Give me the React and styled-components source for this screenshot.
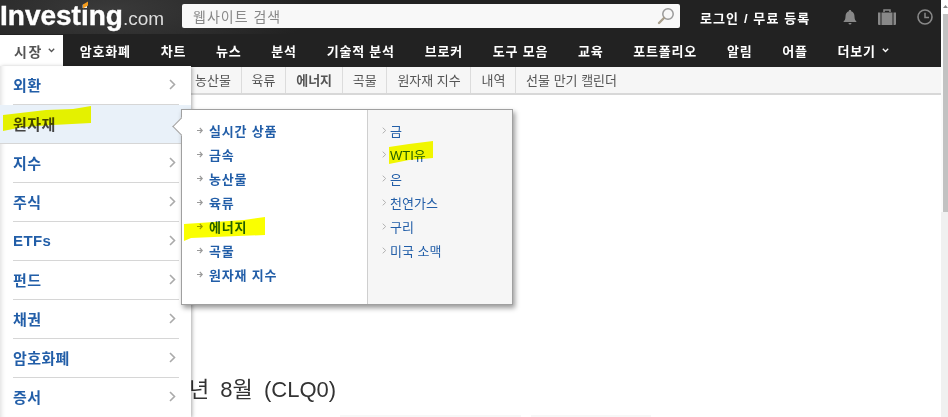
import React from "react";
import styled, { createGlobalStyle } from "styled-components";

const GlobalStyle = createGlobalStyle`
    html, body {
        margin: 0;
        padding: 0;
        height: 100%;
        overflow: hidden;
        background: #fff;
        font-family: "Liberation Sans", "Noto Sans CJK KR", sans-serif;
    }
`;

const Page = styled('div')`
    position: relative;
    display: flex;
    width: 948px;
    height: 417px;
    overflow: hidden;
    background: #fff;
`;

const Main = styled('div')`
    width: 941px;
    flex-shrink: 0;
`;

const TopBar = styled('header')`
    display: flex;
    align-items: center;
    height: 34px;
    background: radial-gradient(ellipse 200px 60px at 110px 10px, #3a3a3a, #222 100%);
    background-color: #222;
`;

const Logo = styled('div')`
    position: relative;
    width: 182px;
    display: flex;
    align-items: baseline;
    color: #fff;
    height: 34px;
    line-height: 32px;
    flex-shrink: 0;
`;

const LogoWord = styled('span')`
    font-size: 28px;
    font-weight: bold;
    -webkit-text-stroke: 0.4px #fff;
`;

const LogoCom = styled('span')`
    font-size: 19px;
    color: #ddd;
`;

const LogoDot = styled('span')`
    position: absolute;
    left: 83px;
    top: 3px;
    width: 5px;
    height: 4px;
    background: #f49c1c;
    transform: skewY(-30deg);
`;

const SearchBox = styled('div')`
    display: flex;
    align-items: center;
    justify-content: space-between;
    width: 498px;
    height: 24px;
    margin-top: -2px;
    box-sizing: border-box;
    padding: 0 5px 0 11px;
    background: #f8f8f8;
    border-radius: 2px;
    color: #888;
    font-size: 14px;
    letter-spacing: 1px;
`;

const UserLinks = styled('div')`
    margin-left: 20px;
    width: 143px;
    color: #fff;
    font-size: 13px;
    font-weight: bold;
    white-space: nowrap;
    letter-spacing: 1.1px;
`;

const IconRow = styled('div')`
    display: flex;
    align-items: center;
    gap: 21px;
    height: 32px;
`;

const NavBar = styled('nav')`
    display: flex;
    height: 33px;
    background: #222;
`;

const MarketTab = styled('div')`
    display: flex;
    align-items: center;
    gap: 5px;
    box-sizing: border-box;
    width: 63px;
    height: 31px;
    margin: 1px 2px 0 0;
    padding-left: 14px;
    background: #fff;
    color: #555;
    font-size: 14px;
    font-weight: bold;
    letter-spacing: 1.5px;
    white-space: nowrap;
`;

const NavItem = styled('div')`
    display: flex;
    align-items: center;
    gap: 6px;
    padding: 0 15px 0 14.8px;
    color: #fff;
    font-size: 13px;
    font-weight: bold;
    letter-spacing: 0.8px;
    white-space: nowrap;
`;

const SubNav = styled('div')`
    display: flex;
    height: 28px;
    box-sizing: border-box;
    padding-left: 185px;
    background: #f6f6f6;
    border-bottom: 2px solid #d8d8d8;
`;

const SubItem = styled('div')`
    display: flex;
    align-items: center;
    padding: 0 9.7px 1px 10px;
    border-right: 1px solid #dcdcdc;
    color: #555;
    font-size: 13px;
    font-weight: ${p => (p.$bold ? 'bold' : 'normal')};
    white-space: nowrap;
    &:last-child {
        border-right: 0;
    }
`;

const Content = styled('main')`
    padding: 283px 0 0 189px;
`;

const Title = styled('h1')`
    margin: 0;
    font-size: 22px;
    font-weight: normal;
    word-spacing: 5px;
    line-height: 24px;
    color: #333;
    white-space: nowrap;
`;

const FaintRow = styled('div')`
    display: flex;
    gap: 10px;
    margin: 13px 0 0 151px;
`;

const FaintBox = styled('div')`
    width: ${p => p.$w}px;
    height: 4px;
    background: #f7f7f7;
`;

const Scrollbar = styled('aside')`
    display: flex;
    flex-direction: column;
    width: 7px;
    background: #f0f0f0;
`;

const ScrollCap = styled('div')`
    display: flex;
    justify-content: flex-end;
    height: 14px;
    padding: 5px 0 0;
    box-sizing: border-box;
    background: #fff;
`;

const ScrollThumb = styled('div')`
    height: 198px;
    border-left: 2px solid #fbfbfb;
    background: #c2c2c2;
`;

const MarketMenu = styled('div')`
    position: absolute;
    left: 0;
    top: 66px;
    width: 191px;
    height: 351px;
    background: #fff;
    box-shadow: 1px 1px 4px rgba(0, 0, 0, 0.35), inset 5px 0 5px -4px rgba(0, 0, 0, 0.15);
`;

const MenuRow = styled('div')`
    display: flex;
    align-items: center;
    justify-content: space-between;
    box-sizing: border-box;
    height: 39px;
    margin: 0 12px 0 13px;
    padding: 0 3px 2px 0;
    border-bottom: 1px solid #d6d6d6;
    color: #225ea8;
    font-size: 15px;
    font-weight: bold;
    letter-spacing: 0.4px;
    &:last-child {
        border-bottom: 0;
    }
`;

const ActiveMenuRow = styled(MenuRow)`
    margin: 0;
    padding: 0 15px 2px 13px;
    background: #e9f1f9;
    color: #444;
`;

const SubMenu = styled('div')`
    position: absolute;
    left: 181px;
    top: 109px;
    width: 332px;
    height: 196px;
    display: flex;
    box-sizing: border-box;
    background: #fff;
    border: 1px solid #a0a0a0;
    box-shadow: 2px 3px 5px rgba(0, 0, 0, 0.4);
`;

const Pointer = styled('span')`
    position: absolute;
    left: -7px;
    top: 10px;
    width: 12px;
    height: 12px;
    background: #fff;
    border-left: 1px solid #a0a0a0;
    border-bottom: 1px solid #a0a0a0;
    transform: rotate(45deg);
`;

const Column = styled('div')`
    box-sizing: border-box;
    width: ${p => p.$w}px;
    padding: 8px 0 0 ${p => p.$left}px;
    background: ${p => (p.$shaded ? '#f6f6f6' : '#fff')};
    ${p => p.$shaded && 'border-left: 1px solid #cfcfcf;'}
`;

const SubLink = styled('div')`
    display: flex;
    align-items: center;
    gap: 6px;
    height: 24px;
    color: #225ea8;
    font-size: 13px;
    font-weight: bold;
    letter-spacing: 0.8px;
    white-space: nowrap;
`;

const ThinLink = styled(SubLink)`
    gap: 3px;
    font-weight: normal;
    letter-spacing: 0;
`;

const Marker = styled('svg')`
    position: absolute;
    left: ${p => p.$x}px;
    top: ${p => p.$y}px;
    mix-blend-mode: multiply;
    pointer-events: none;
`;

const Chevron = () => (
    <svg width="7" height="11" viewBox="0 0 7 11">
        <path d="M1 1l4.500 4.500L1 10" fill="none" stroke="#aaa" strokeWidth="1.600" />
    </svg>
);

const Caret = ({ color }) => (
    <svg width="7" height="5" viewBox="0 0 7 5">
        <path d="M.8.8l2.700 2.700L6.200.8" fill="none" stroke={color} strokeWidth="1.300" />
    </svg>
);

const ArrowBullet = () => (
    <svg width="6" height="7" viewBox="0 0 6 7">
        <path d="M0 3.500h5M2.800 1l2.500 2.500L2.800 6" fill="none" stroke="#999" strokeWidth="1.100" />
    </svg>
);

const ThinBullet = () => (
    <svg width="5" height="7" viewBox="0 0 5 7">
        <path d="M.7.7l3 2.800-3 2.800" fill="none" stroke="#aaa" strokeWidth=".9" />
    </svg>
);

const SearchIcon = () => (
    <svg width="18" height="18" viewBox="0 0 18 18">
        <circle cx="11" cy="7" r="5.200" fill="none" stroke="#999" strokeWidth="1.500" />
        <path d="M7 11l-5 5" stroke="#a99f8c" strokeWidth="2.400" strokeLinecap="round" />
    </svg>
);

const BellIcon = () => (
    <svg width="14" height="15" viewBox="0 0 14 15">
        <path d="M7 0c.8 0 1.200.5 1.200 1.200C10.500 2 11.500 4 11.500 6.500c0 2.500.8 4 2.200 5.500H.3c1.400-1.500 2.200-3 2.200-5.500C2.500 4 3.500 2 5.800 1.200 5.800.5 6.200 0 7 0z" fill="#888" />
        <path d="M5.500 13h3a1.500 1.500 0 0 1-3 0z" fill="#888" />
    </svg>
);

const CaseIcon = () => (
    <svg width="18" height="16" viewBox="0 0 18 16">
        <path d="M6 3V1h6v2" fill="none" stroke="#888" strokeWidth="1.500" />
        <path d="M0 3.500h2.500V16H1a1 1 0 0 1-1-1zM3.500 3.500h11V16h-11zM15.500 3.500H18V15a1 1 0 0 1-1 1h-1.500z" fill="#888" />
    </svg>
);

const ClockIcon = () => (
    <svg width="16" height="16" viewBox="0 0 16 16">
        <circle cx="8" cy="8" r="7" fill="none" stroke="#888" strokeWidth="1.600" />
        <path d="M8 3.800V8.500H12" fill="none" stroke="#888" strokeWidth="1.500" />
    </svg>
);

const ScrollArrow = () => (
    <svg width="5" height="3" viewBox="0 0 5 3">
        <path d="M0 3L2.500 0 5 3z" fill="#888" />
    </svg>
);

const navItems = ['암호화폐', '차트', '뉴스', '분석', '기술적 분석', '브로커', '도구 모음', '교육', '포트폴리오', '알림', '어플'];
const subItems = ['농산물', '육류', '에너지', '곡물', '원자재 지수', '내역', '선물 만기 캘린더'];
const menuItems = ['외환', '원자재', '지수', '주식', 'ETFs', '펀드', '채권', '암호화폐', '증서'];
const groupLinks = ['실시간 상품', '금속', '농산물', '육류', '에너지', '곡물', '원자재 지수'];
const energyLinks = ['금', 'WTI유', '은', '천연가스', '구리', '미국 소맥'];

const App = () => (
    <Page>
        <GlobalStyle />
        <Main>
            <TopBar>
                <Logo>
                    <LogoWord>Investing</LogoWord>
                    <LogoCom>.com</LogoCom>
                    <LogoDot />
                </Logo>
                <SearchBox>
                    <span>웹사이트 검색</span>
                    <SearchIcon />
                </SearchBox>
                <UserLinks>로그인 / 무료 등록</UserLinks>
                <IconRow>
                    <BellIcon />
                    <CaseIcon />
                    <ClockIcon />
                </IconRow>
            </TopBar>
            <NavBar>
                <MarketTab>시장<Caret color="#555" /></MarketTab>
                {navItems.map(label => (
                    <NavItem key={label}>{label}</NavItem>
                ))}
                <NavItem>더보기<Caret color="#fff" /></NavItem>
            </NavBar>
            <SubNav>
                {subItems.map(label => (
                    <SubItem key={label} $bold={label === '에너지'}>{label}</SubItem>
                ))}
            </SubNav>
            <Content>
                <Title>년 8월 (CLQ0)</Title>
                <FaintRow>
                    <FaintBox $w={181} />
                    <FaintBox $w={120} />
                </FaintRow>
            </Content>
        </Main>
        <Scrollbar>
            <ScrollCap><ScrollArrow /></ScrollCap>
            <ScrollThumb />
        </Scrollbar>

        <MarketMenu>
            {menuItems.map(label => (
                label === '원자재'
                    ? <ActiveMenuRow key={label}>{label}</ActiveMenuRow>
                    : <MenuRow key={label}>{label}<Chevron /></MenuRow>
            ))}
        </MarketMenu>
        <SubMenu>
            <Pointer />
            <Column $w={185} $left={15}>
                {groupLinks.map(label => (
                    <SubLink key={label}><ArrowBullet />{label}</SubLink>
                ))}
            </Column>
            <Column $shaded $w={145} $left={14}>
                {energyLinks.map(label => (
                    <ThinLink key={label}><ThinBullet />{label}</ThinLink>
                ))}
            </Column>
        </SubMenu>

        <Marker $x={3} $y={105} width="90" height="27" viewBox="0 0 90 27">
            <path d="M0 10l43-5 27-1 18-3v17l-38 2-30 2-20 4z" fill="#faff00" />
        </Marker>
        <Marker $x={184} $y={217} width="82" height="25" viewBox="0 0 82 25">
            <path d="M0 7l30-2 30-2 21-3v18l-51 2-23 1-7 3z" fill="#faff00" />
        </Marker>
        <Marker $x={389} $y={141} width="45" height="24" viewBox="0 0 45 24">
            <path d="M0 6l20-3 24-3v17l-24 2-20 4z" fill="#faff00" />
        </Marker>
    </Page>
);

export default App;
